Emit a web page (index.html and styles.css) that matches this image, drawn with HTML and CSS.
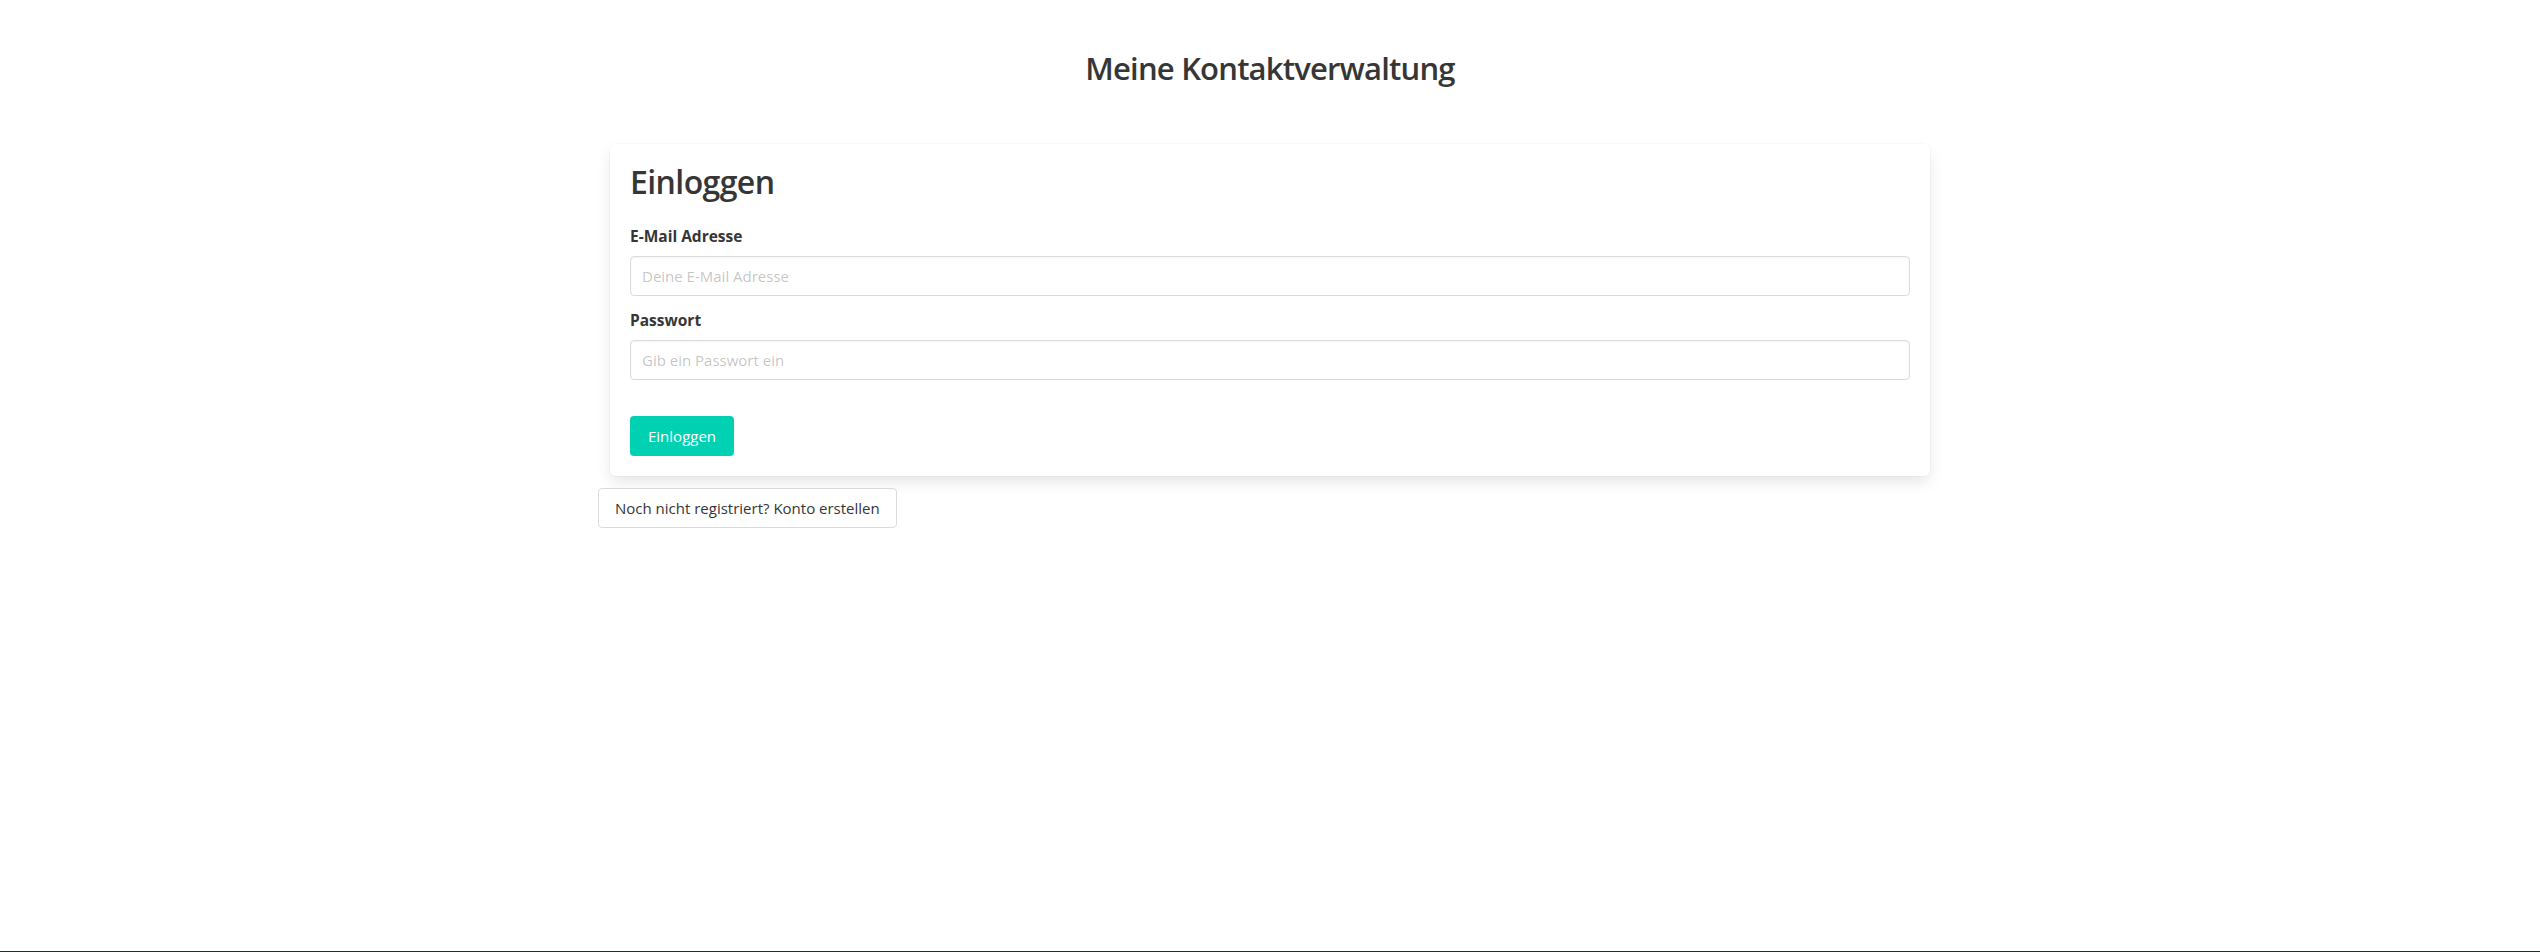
FILE: index.html
```html
<!DOCTYPE html>
<html lang="de">
<head>
<meta charset="utf-8">
<title>Meine Kontaktverwaltung</title>
<link rel="stylesheet" href="styles.css">
</head>
<body>
<div class="page">
  <header class="header">
    <h1 class="site-title">Meine Kontaktverwaltung</h1>
  </header>
  <main class="container">
    <div class="column">
      <form class="box">
        <h2 class="box-title">Einloggen</h2>
        <div class="field">
          <label class="label" for="email">E-Mail Adresse</label>
          <input class="input" id="email" type="email" placeholder="Deine E-Mail Adresse">
        </div>
        <div class="field">
          <label class="label" for="pw">Passwort</label>
          <input class="input" id="pw" type="password" placeholder="Gib ein Passwort ein">
        </div>
        <div class="actions">
          <button type="button" class="button primary">Einloggen</button>
        </div>
      </form>
    </div>
    <button type="button" class="button light">Noch nicht registriert? Konto erstellen</button>
  </main>
</div>
</body>
</html>
```

FILE: styles.css
```css
* { box-sizing: border-box; }
html, body { margin: 0; padding: 0; background: #fff; }
body {
  font-family: "Open Sans", "Noto Sans", sans-serif;
  color: #363636;
  font-size: 15px;
  line-height: 1.5;
}
.page {
  min-height: 100vh;
  border-bottom: 1px solid #1c3327;
  padding-top: 50px;
}
.header { text-align: center; }
.site-title {
  margin: 0;
  font-size: 31px;
  line-height: 36px;
  font-weight: 550;
  letter-spacing: -0.8px;
  color: #363636;
}
.container {
  width: 1344px;
  margin: 46px auto 0;
}
.column { padding: 12px; }
.box {
  background: #fff;
  border-radius: 6px;
  padding: 20px;
  box-shadow: 0 0.5em 1em -0.125em rgba(10,10,10,.1), 0 0 0 1px rgba(10,10,10,.02);
}
.box-title {
  margin: 0 0 24px;
  font-size: 32px;
  line-height: 36px;
  font-weight: 550;
  letter-spacing: -0.6px;
  color: #363636;
}
.field { margin-bottom: 12px; }
.label {
  display: block;
  font-weight: 700;
  font-size: 15.5px;
  line-height: 24px;
  margin-bottom: 8px;
  color: #363636;
}
.input {
  display: block;
  width: 100%;
  height: 40px;
  border: 1px solid #dbdbdb;
  border-radius: 4px;
  padding: 0 11px;
  font-family: inherit;
  font-size: 15px;
  color: #363636;
  background: #fff;
  box-shadow: inset 0 0.0625em 0.125em rgba(10,10,10,.05);
}
.input::placeholder { color: rgba(54,54,54,.3); }
.actions { padding-top: 24px; }
.button {
  display: inline-flex;
  align-items: center;
  justify-content: center;
  height: 40px;
  padding: 0 16px;
  border: 1px solid transparent;
  border-radius: 4px;
  font-family: inherit;
  font-size: 15px;
  line-height: 1.5;
  cursor: pointer;
}
.button.primary {
  background: #00d1b2;
  color: #fff;
  padding: 0 17px;
}
.button.light {
  background: #fff;
  border-color: #dbdbdb;
  color: #363636;
}
```
